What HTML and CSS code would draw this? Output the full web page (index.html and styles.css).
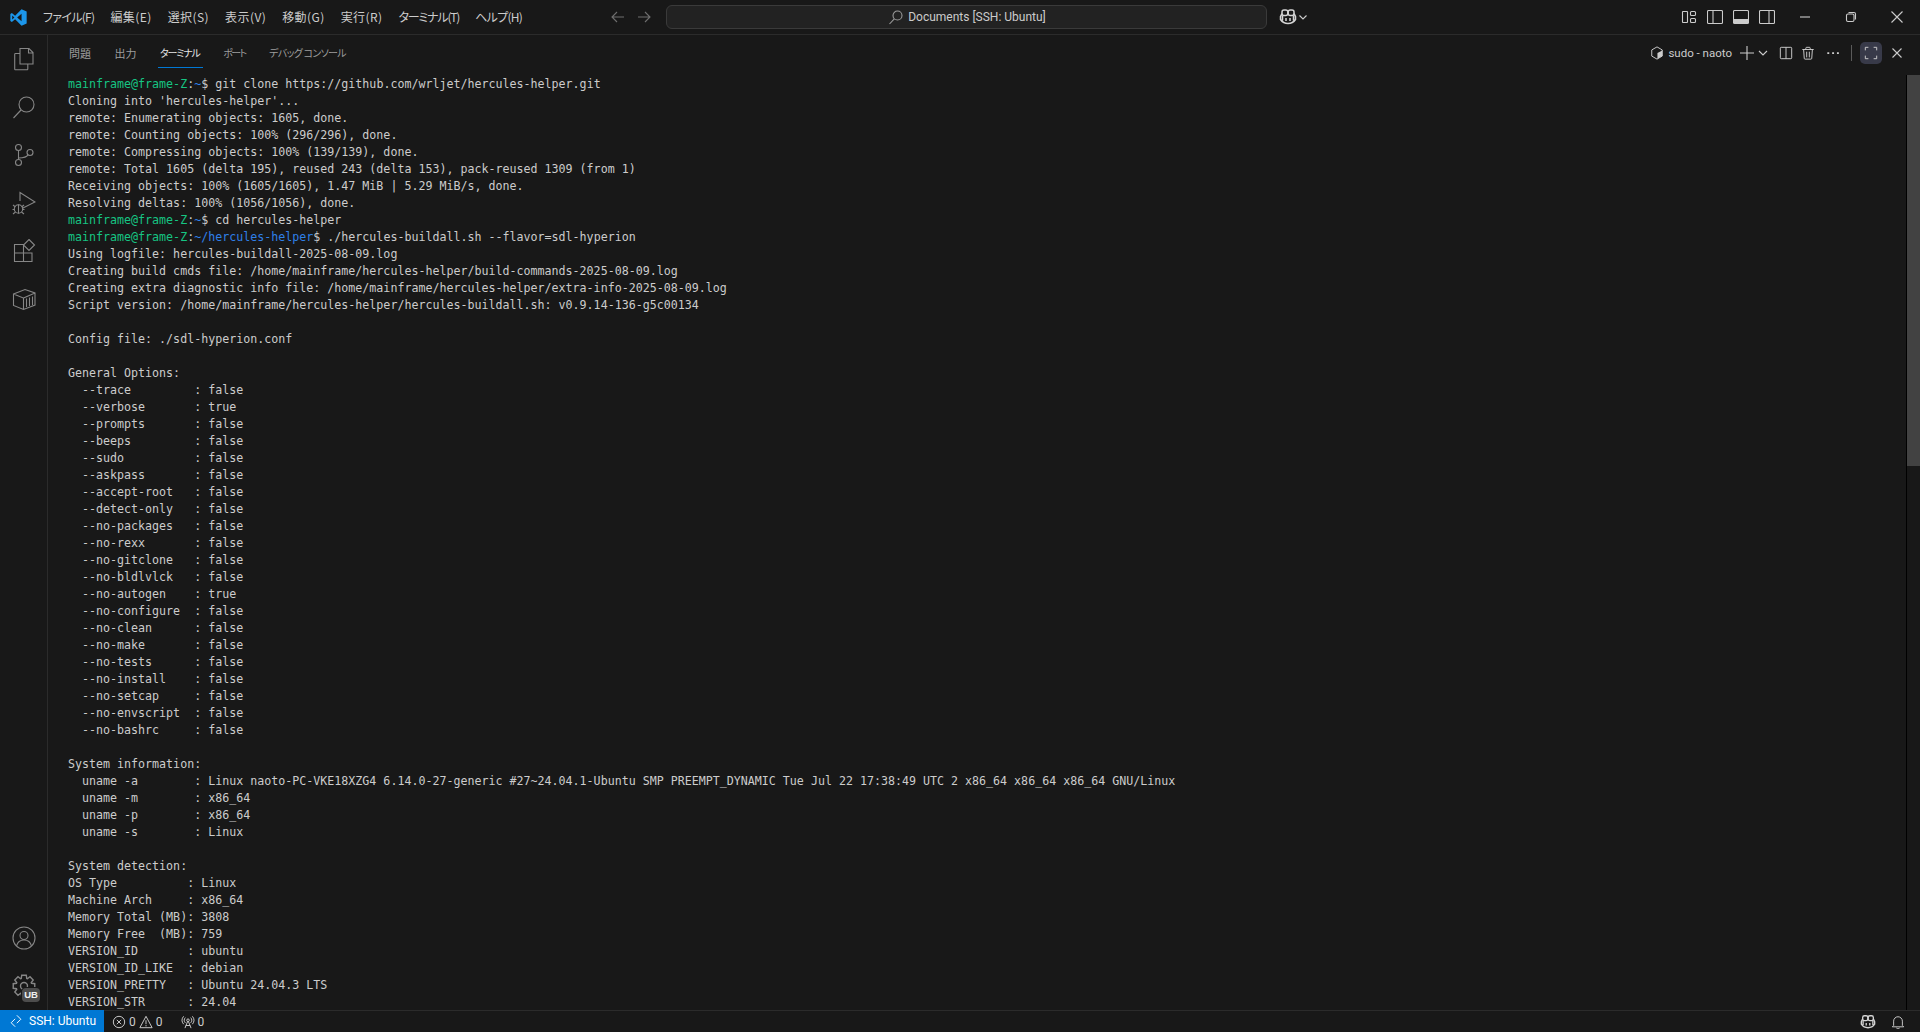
FILE: index.html
```html
<!DOCTYPE html>
<html lang="ja">
<head>
<meta charset="utf-8">
<title>Documents [SSH: Ubuntu]</title>
<link rel="stylesheet" href="styles.css">
</head>
<body>
<div class="window">
  <header class="titlebar">
    <div class="title-left">
      <div class="logo">
        <svg width="17" height="17" viewBox="0 0 100 100"><path class="logo-a" d="M68 2 L98 15 V85 L68 98 L30 61 L11 76 L2 70 V30 L11 24 L30 39 Z M68 28 L42 50 L68 72 Z M13 38 V62 L26 50 Z"/></svg>
      </div>
      <nav class="menu">
        <span class="k1">ファイル(F)</span><span class="kj">編集(E)</span><span class="kj">選択(S)</span><span class="kj">表示(V)</span><span class="kj">移動(G)</span><span class="kj">実行(R)</span><span class="k2">ターミナル(T)</span><span class="k1">ヘルプ(H)</span>
      </nav>
    </div>
    <div class="title-nav">
      <svg class="ic16 dim" viewBox="0 0 16 16"><path d="M14 8H2.500M7 3 2 8l5 5"/></svg>
      <svg class="ic16 dim" viewBox="0 0 16 16"><path d="M2 8h11.500M9 3l5 5-5 5"/></svg>
    </div>
    <div class="search">
      <svg class="ic16" viewBox="0 0 16 16"><circle cx="9.500" cy="6.500" r="4.500"/><path d="M6.300 9.800 1.500 15"/></svg>
      <span>Documents [SSH: Ubuntu]</span>
    </div>
    <div class="copilot">
      <svg class="ic18 pilot" viewBox="0 0 18 18"><rect x="3" y="2" width="5.800" height="5.500" rx="2"/><rect x="9.200" y="2" width="5.800" height="5.500" rx="2"/><path d="M3 5.500 1.500 8.500v3c1.700 2.500 4.500 4 7.500 4s5.800-1.500 7.500-4v-3L15 5.500M3.500 7.500v5M14.500 7.500v5M7 10v3M11 10v3"/></svg>
      <svg class="ic10" viewBox="0 0 10 10"><path d="m1.500 3.500 3.500 3.500 3.500-3.500"/></svg>
    </div>
    <div class="spacer"></div>
    <div class="layout-icons">
      <svg class="ic16" viewBox="0 0 16 16"><rect x="1.500" y="2.500" width="5" height="11" rx=".5"/><rect x="9.500" y="2.500" width="5" height="4" rx="1"/><rect x="9.500" y="9.500" width="5" height="4" rx="1"/></svg>
      <svg class="ic16" viewBox="0 0 16 16"><rect x=".5" y="1.500" width="15" height="13" rx="1"/><path d="M6 1.500v13"/></svg>
      <svg class="ic16" viewBox="0 0 16 16"><rect x=".5" y="1.500" width="15" height="13" rx="1"/><path class="solid" d="M1 10h14v4H1z"/></svg>
      <svg class="ic16" viewBox="0 0 16 16"><rect x=".5" y="1.500" width="15" height="13" rx="1"/><path d="M10 1.500v13"/></svg>
    </div>
    <div class="winctl">
      <div class="winbtn"><svg class="ic12" viewBox="0 0 12 12"><path d="M1 6h10"/></svg></div>
      <div class="winbtn"><svg class="ic12" viewBox="0 0 12 12"><rect x="1.500" y="3" width="7.500" height="7.500" rx="1.500"/><path d="M3.500 1.500h5.500a1.500 1.500 0 0 1 1.500 1.500v5.500"/></svg></div>
      <div class="winbtn"><svg class="ic12" viewBox="0 0 12 12"><path d="m.5.500 11 11M11.500.5l-11 11"/></svg></div>
    </div>
  </header>

  <div class="middle">
    <aside class="activity">
      <div class="act-group">
        <div class="act"><svg class="ic24" viewBox="0 0 24 24"><path d="M8 1.500h9l4 4v11.500H8zM16.500 1.500v4.500H21M8 6.500H3.500a.8.8 0 0 0-.8.8V22a.8.8 0 0 0 .8.8H15a.8.8 0 0 0 .8-.8v-5"/></svg></div>
        <div class="act"><svg class="ic24" viewBox="0 0 24 24"><circle cx="14.500" cy="9.500" r="7.500"/><path d="m9 15-7.500 8"/></svg></div>
        <div class="act"><svg class="ic24" viewBox="0 0 24 24"><circle cx="6.500" cy="4.500" r="3"/><circle cx="6.500" cy="19.500" r="3"/><circle cx="18" cy="9.500" r="3"/><path d="M6.500 7.500v9M6.500 15c5 0 8.500-1 9.500-3.500"/></svg></div>
        <div class="act"><svg class="ic24" viewBox="0 0 24 24"><path d="M8 10V1.500L23 11 10 17.500"/><circle cx="6.500" cy="18" r="4.200"/><path d="M6.500 13.500v9M1 14l2.500 2M12 14l-2.500 2M.5 18.500h2M10.500 18.500h2M1 23l2.500-2M12 23l-2.500-2"/></svg></div>
        <div class="act"><svg class="ic24" viewBox="0 0 24 24"><path d="M2.500 5.500h9v8.500h8.500v8.500H2.500zM2.500 14h9v8.500"/><path d="m17 .5 5.500 5.500-5.500 5.500L11.500 6z"/></svg></div>
        <div class="act"><svg class="ic24" viewBox="0 0 24 24"><path d="M1.500 7 13 2.500l10 3.500v12l-11.500 4.500-10-4zM1.500 7l10 4v11.500M11.500 11 23 6M14.500 11.500v8.500M17.500 10.500v8.500M20.500 9.500v8.500"/></svg></div>
      </div>
      <div class="act-group">
        <div class="act"><svg class="ic24" viewBox="0 0 24 24"><circle cx="12" cy="12" r="11"/><circle cx="12" cy="9.500" r="4"/><path d="M4.500 20c1-4 4-6 7.500-6s6.500 2 7.500 6"/></svg></div>
        <div class="act">
          <svg class="ic24 gear" viewBox="0 0 24 24"><polygon points="19.52,9.26 22.76,9.71 22.76,14.29 19.52,14.74 19.25,15.38 21.23,18 18,21.23 15.38,19.25 14.74,19.52 14.29,22.76 9.71,22.76 9.26,19.52 8.62,19.25 6,21.23 2.77,18 4.75,15.38 4.48,14.74 1.24,14.29 1.24,9.71 4.48,9.26 4.75,8.62 2.77,6 6,2.77 8.62,4.75 9.26,4.48 9.71,1.24 14.29,1.24 14.74,4.48 15.38,4.75 18,2.77 21.23,6 19.25,8.62"/><circle cx="12" cy="12" r="3.500"/></svg>
          <span class="badge">UB</span>
        </div>
      </div>
    </aside>

    <main class="panel">
      <div class="panel-head">
        <div class="tabs">
          <span class="tab">問題</span><span class="tab">出力</span><span class="tab active kt1">ターミナル</span><span class="tab kt2">ポート</span><span class="tab kt3">デバッグ コンソール</span>
        </div>
        <div class="actions">
          <svg class="ic14" viewBox="0 0 16 16"><path d="M8 1 14 4.500v7L8 15l-6-3.500v-7z"/><path class="solid" d="M8.500 8 14 5v6.500L8.500 14.500z"/></svg>
          <span class="term-name">sudo - naoto</span>
          <svg class="ic16 plus" viewBox="0 0 16 16"><path d="M8 1v14M1 8h14"/></svg>
          <svg class="ic10 chev" viewBox="0 0 10 10"><path d="m1 3 4 4 4-4"/></svg>
          <svg class="ic14 split" viewBox="0 0 16 16"><rect x="1.500" y="1.500" width="13" height="13" rx="1"/><path d="M8 1.500v13"/></svg>
          <svg class="ic14 trash" viewBox="0 0 16 16"><path d="M1.500 4h13M5.500 4V2.500a1 1 0 0 1 1-1h3a1 1 0 0 1 1 1V4M3 4l.7 10a1 1 0 0 0 1 1h6.600a1 1 0 0 0 1-1L13 4M6.500 6.500V13M9.500 6.500V13"/></svg>
          <svg class="ic14 more" viewBox="0 0 16 16"><path class="solid" d="M1.500 7h2.200v2H1.500zM7 7h2.200v2H7zM12.500 7h2.200v2h-2.200z"/></svg>
          <span class="divider"></span>
          <span class="max-box"><svg class="ic14" viewBox="0 0 16 16"><path d="M1.500 5V1.500H5M11 1.500h3.500V5M14.500 11v3.500H11M5 14.500H1.500V11"/></svg></span>
          <svg class="ic12 close" viewBox="0 0 12 12"><path d="m1.500 1.500 9 9M10.500 1.500l-9 9"/></svg>
        </div>
      </div>
      <div class="terminal">
        <div class="output">
          <div class="prompt"><span class="g">mainframe@frame-Z</span><span>:</span><span class="b">~</span><span>$ git clone https://github.com/wrljet/hercules-helper.git</span></div>
<pre class="block">Cloning into 'hercules-helper'...
remote: Enumerating objects: 1605, done.
remote: Counting objects: 100% (296/296), done.
remote: Compressing objects: 100% (139/139), done.
remote: Total 1605 (delta 195), reused 243 (delta 153), pack-reused 1309 (from 1)
Receiving objects: 100% (1605/1605), 1.47 MiB | 5.29 MiB/s, done.
Resolving deltas: 100% (1056/1056), done.</pre>
          <div class="prompt"><span class="g">mainframe@frame-Z</span><span>:</span><span class="b">~</span><span>$ cd hercules-helper</span></div>
          <div class="prompt"><span class="g">mainframe@frame-Z</span><span>:</span><span class="b">~/hercules-helper</span><span>$ ./hercules-buildall.sh --flavor=sdl-hyperion</span></div>
<pre class="block">Using logfile: hercules-buildall-2025-08-09.log
Creating build cmds file: /home/mainframe/hercules-helper/build-commands-2025-08-09.log
Creating extra diagnostic info file: /home/mainframe/hercules-helper/extra-info-2025-08-09.log
Script version: /home/mainframe/hercules-helper/hercules-buildall.sh: v0.9.14-136-g5c00134

Config file: ./sdl-hyperion.conf

General Options:
  --trace         : false
  --verbose       : true
  --prompts       : false
  --beeps         : false
  --sudo          : false
  --askpass       : false
  --accept-root   : false
  --detect-only   : false
  --no-packages   : false
  --no-rexx       : false
  --no-gitclone   : false
  --no-bldlvlck   : false
  --no-autogen    : true
  --no-configure  : false
  --no-clean      : false
  --no-make       : false
  --no-tests      : false
  --no-install    : false
  --no-setcap     : false
  --no-envscript  : false
  --no-bashrc     : false

System information:
  uname -a        : Linux naoto-PC-VKE18XZG4 6.14.0-27-generic #27~24.04.1-Ubuntu SMP PREEMPT_DYNAMIC Tue Jul 22 17:38:49 UTC 2 x86_64 x86_64 x86_64 GNU/Linux
  uname -m        : x86_64
  uname -p        : x86_64
  uname -s        : Linux

System detection:
OS Type          : Linux
Machine Arch     : x86_64
Memory Total (MB): 3808
Memory Free  (MB): 759
VERSION_ID       : ubuntu
VERSION_ID_LIKE  : debian
VERSION_PRETTY   : Ubuntu 24.04.3 LTS
VERSION_STR      : 24.04</pre>
        </div>
        <div class="scrollbar"><div class="thumb"></div></div>
      </div>
    </main>
  </div>

  <footer class="status">
    <div class="remote">
      <svg class="ic14" viewBox="0 0 16 16"><path d="M9 1.500 13.500 6 9 10.500M7 5.500 2.500 10 7 14.500" /></svg>
      <span>SSH: Ubuntu</span>
    </div>
    <div class="stat stat-problems">
      <svg class="ic14" viewBox="0 0 16 16"><circle cx="8" cy="8" r="6.500"/><path d="m5.500 5.500 5 5M10.500 5.500l-5 5"/></svg>
      <span>0</span>
      <svg class="ic14" viewBox="0 0 16 16"><path d="M8 1.500 15 14.500H1zM8 6v4.500M8 11.500v1.500"/></svg>
      <span>0</span>
    </div>
    <div class="stat stat-ports">
      <svg class="ic14" viewBox="0 0 16 16"><circle cx="8" cy="6" r="1.500"/><path d="M7.500 7.500 4.500 15M8.500 7.500l3 7.500M5.500 12h5M5 3a4 4 0 0 0 0 6M11 3a4 4 0 0 1 0 6M3 1.500a7 7 0 0 0 0 9M13 1.500a7 7 0 0 1 0 9"/></svg>
      <span>0</span>
    </div>
    <div class="spacer"></div>
    <div class="status-right">
      <svg class="ic16 pilot" viewBox="0 0 18 18"><rect x="3" y="2" width="5.800" height="5.500" rx="2"/><rect x="9.200" y="2" width="5.800" height="5.500" rx="2"/><path d="M3 5.500 1.500 8.500v3c1.700 2.500 4.500 4 7.500 4s5.800-1.500 7.500-4v-3L15 5.500M3.500 7.500v5M14.500 7.500v5M7 10v3M11 10v3"/></svg>
      <svg class="ic14" viewBox="0 0 16 16"><path d="M3 12V7a5 5 0 0 1 10 0v5l1.500 1.500h-13zM6.500 14.500a1.500 1.500 0 0 0 3 0"/></svg>
    </div>
  </footer>
</div>
</body>
</html>
```

FILE: styles.css
```css
* { box-sizing: border-box; }
html, body { margin: 0; height: 100%; background: #181818; overflow: hidden; }
body { color: #cccccc; font-family: "Noto Sans CJK JP", "Noto Sans", sans-serif; font-size: 12px; }
.window { display: flex; flex-direction: column; height: 1032px; width: 1920px; }
svg { fill: none; stroke: currentColor; stroke-width: 1.1; flex: none; display: block; }
.solid { fill: currentColor; stroke: none; }
.pilot { stroke-width: 1.5; color: #d4d4d4; }
.gear { stroke-width: 1.4; }
.ic10 { width: 10px; height: 10px; }
.ic12 { width: 12px; height: 12px; }
.ic14 { width: 14px; height: 14px; }
.ic16 { width: 16px; height: 16px; }
.ic18 { width: 18px; height: 18px; }
.ic24 { width: 24px; height: 24px; }
.spacer { flex: 1; }

.titlebar { flex: 0 0 35px; display: flex; align-items: center; border-bottom: 1px solid #2b2b2b; }
.title-left { flex: 0 0 606px; display: flex; align-items: center; }
.logo { flex: 0 0 35px; display: flex; justify-content: center; padding-left: 1px; }
.logo-a { fill: #1c96ea; stroke: none; fill-rule: evenodd; }
.menu { display: flex; font-feature-settings: "palt"; }
.menu span { padding: 0 8px; line-height: 22px; white-space: nowrap; }
.menu .k1 { letter-spacing: -0.7px; }
.menu .k2 { letter-spacing: -1.2px; }
.menu .kj { letter-spacing: 0.42px; }
.title-nav { flex: 0 0 60px; display: flex; gap: 10px; padding-left: 4px; }
.dim { color: #6f6f6f; }
.search { flex: 0 0 601px; height: 24px; display: flex; align-items: center; justify-content: center; gap: 4px; padding-left: 1px; background: #222222; border: 1px solid #3a3a3a; border-radius: 6px; font-family: Roboto, sans-serif; font-size: 12px; color: #cccccc; }
.search svg { color: #9a9a9a; }
.copilot { display: flex; align-items: center; gap: 1px; margin-left: 12px; color: #cccccc; }
.layout-icons { display: flex; gap: 10px; margin-right: 7px; }
.winctl { display: flex; }
.winbtn { width: 46px; height: 34px; display: flex; align-items: center; justify-content: center; }

.middle { flex: 1; display: flex; min-height: 0; }
.activity { flex: 0 0 48px; display: flex; flex-direction: column; justify-content: space-between; border-right: 1px solid #2b2b2b; color: #868686; }
.act { height: 48px; display: flex; align-items: center; justify-content: center; position: relative; }
.badge { position: absolute; left: 22px; top: 26px; width: 18px; height: 14px; text-align: center; border-radius: 4px; background: #4d4d4d; color: #f0f0f0; font: 700 9.5px/14px "Liberation Sans", sans-serif; box-shadow: 0 0 0 1px #181818; }

.panel { flex: 1; display: flex; flex-direction: column; min-width: 0; }
.panel-head { flex: 0 0 40px; display: flex; align-items: flex-start; justify-content: space-between; padding-top: 7px; }
.tabs { display: flex; padding-left: 21px; gap: 23.5px; font-size: 11px; color: #9d9d9d; font-feature-settings: "palt"; }
.tab { height: 26px; line-height: 22px; white-space: nowrap; }
.tab.active { color: #e7e7e7; position: relative; }
.tab.active::after { content: ""; position: absolute; left: -2px; right: -3px; bottom: 0; height: 1px; background: #0078d4; }
.kt1 { font-size: 10px; letter-spacing: -1.2px; }
.kt2 { font-size: 10px; letter-spacing: -1.6px; }
.kt3 { font-size: 10px; letter-spacing: -0.7px; }
.actions { display: flex; align-items: center; height: 22px; color: #cccccc; padding-right: 17px; }
.term-name { margin-left: 4px; font-family: Roboto, sans-serif; font-size: 11.5px; }
.plus { margin-left: 7px; }
.chev { margin-left: 3px; }
.split { margin-left: 11px; }
.trash { margin-left: 8px; }
.more { margin-left: 11px; }
.divider { width: 1px; height: 16px; background: #5a5a5a; margin-left: 11px; }
.max-box { width: 22px; height: 22px; margin-left: 8px; border-radius: 5px; background: #383a49; display: flex; align-items: center; justify-content: center; }
.close { margin-left: 9px; }

.terminal { flex: 1; position: relative; min-height: 0; overflow: hidden; padding: 1px 0 0 20px; }
.output { font-family: "DejaVu Sans Mono", monospace; font-size: 11.65px; line-height: 17px; color: #cccccc; }
.block { margin: 0; font: inherit; }
.prompt { display: flex; white-space: pre; height: 17px; }
.g { color: #16c583; }
.b { color: #2f80e8; }
.scrollbar { position: absolute; right: 0; top: 0; bottom: 0; width: 14px; border-left: 1px solid #000; }
.thumb { height: 391px; background: #424242; }

.status { flex: 0 0 22px; display: flex; align-items: center; border-top: 1px solid #2b2b2b; font-family: Roboto, sans-serif; font-size: 12px; color: #cccccc; }
.remote { width: 104px; height: 22px; margin-top: -1px; background: #0078d4; color: #fff; display: flex; align-items: center; gap: 6px; padding-left: 9px; }
.stat { display: flex; align-items: center; gap: 3px; }
.stat-problems { margin-left: 8px; }
.stat-ports { margin-left: 18px; }
.status-right { display: flex; align-items: center; gap: 15px; padding-right: 15px; }
```
